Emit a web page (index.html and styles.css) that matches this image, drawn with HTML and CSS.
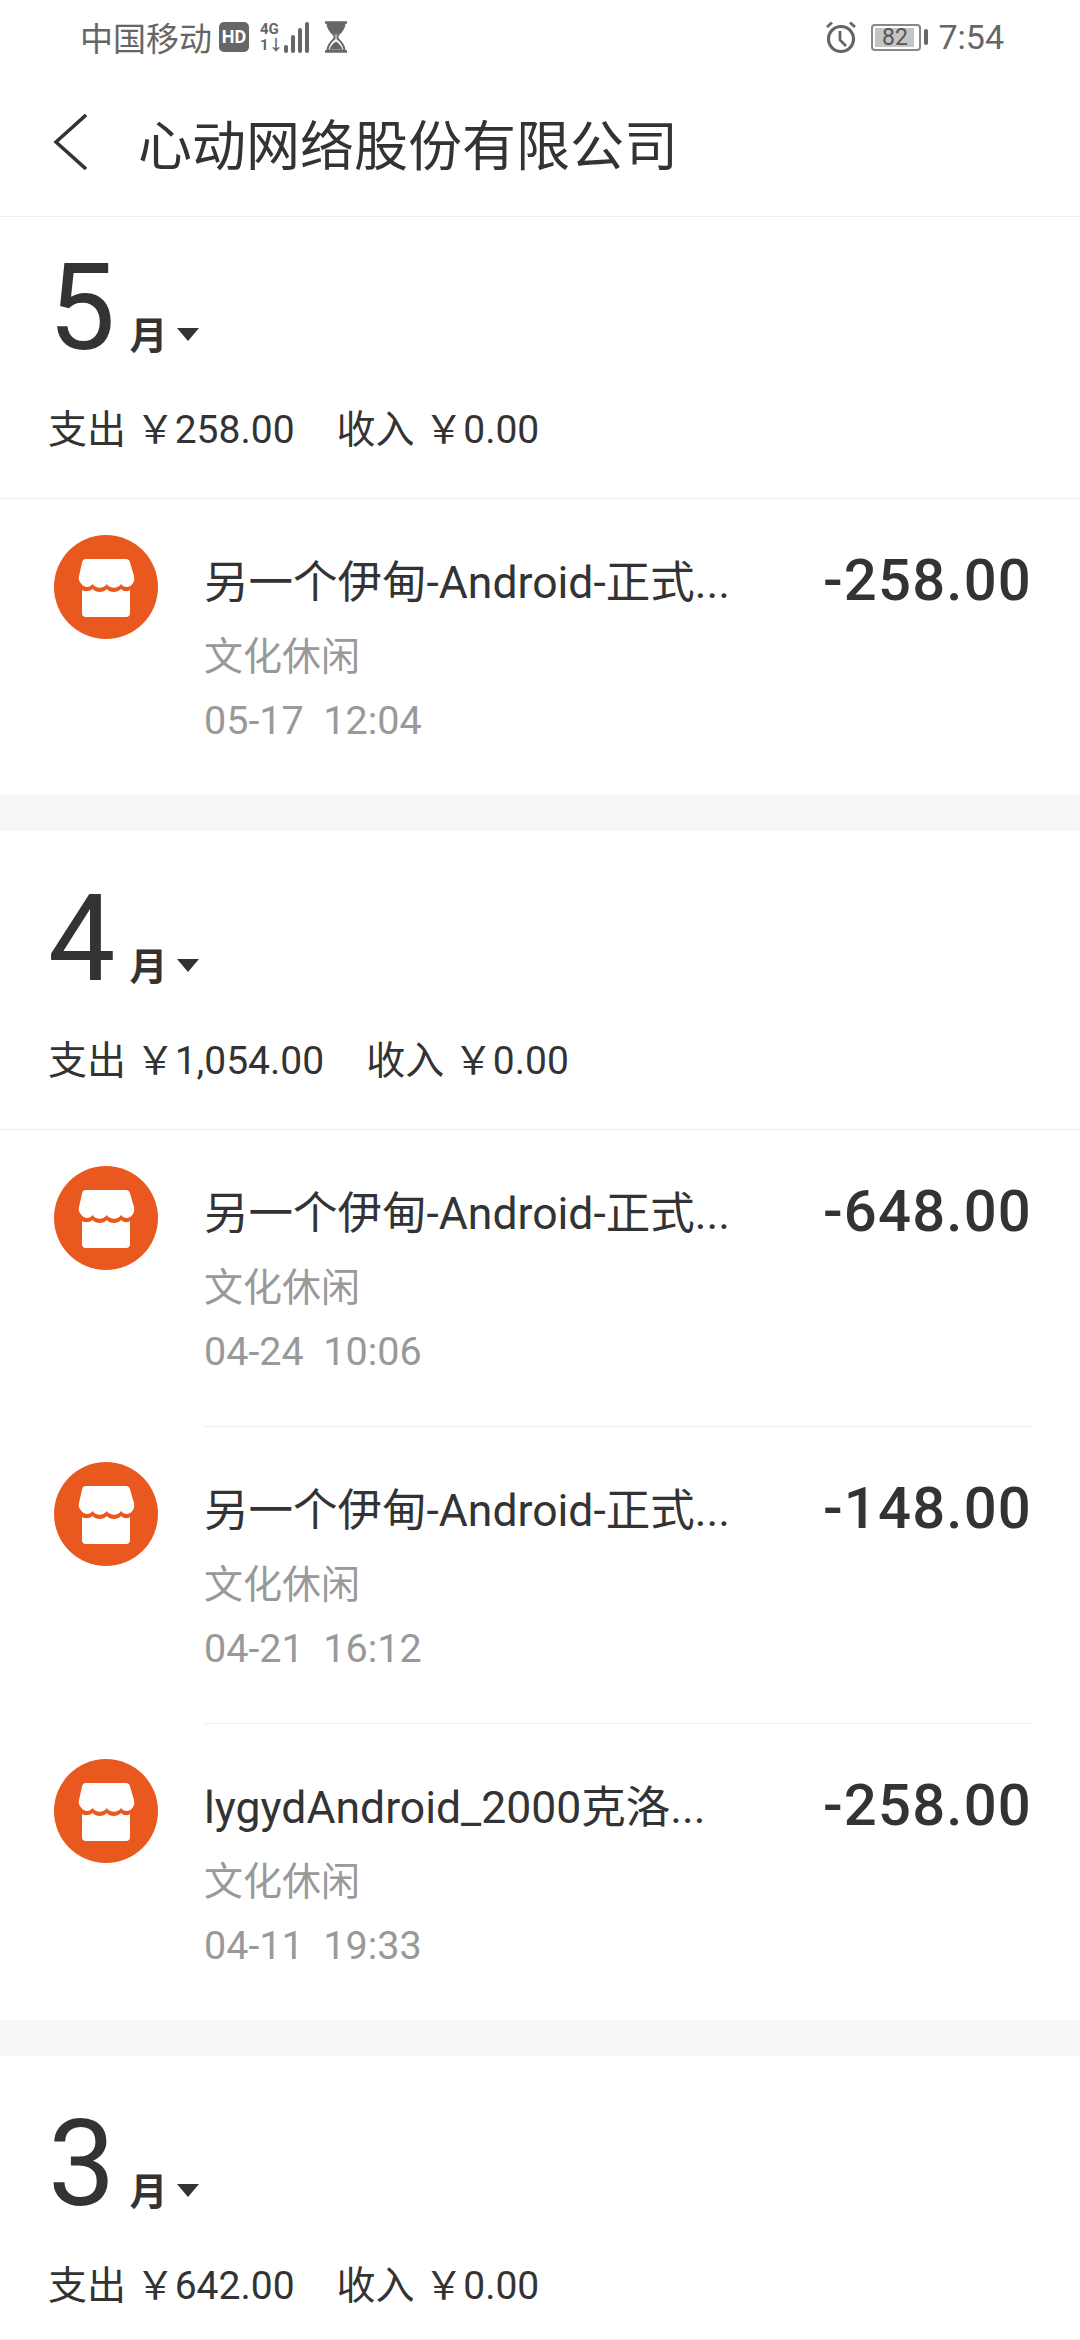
FILE: index.html
```html
<!DOCTYPE html>
<html lang="zh-CN">
<head>
    <meta charset="UTF-8">
    <title>心动网络股份有限公司</title>
    <link rel="stylesheet" href="styles.css">
</head>
<body>
    <svg class="sprites" width="0" height="0">
        <symbol id="shop" viewBox="0 0 104 104">
            <circle cx="52" cy="52" r="52" fill="#e8581f"/>
            <path d="M32 24H72a4 4 0 0 1 3.800 2.800L80 41q1 4-1 7c-3 5-9 5-12 1c-3 5-11 5-14.300 0c-3 5-11 5-14 0c-3 4-9 4-12-1q-2.700-3-1.700-7L28.200 26.800A4 4 0 0 1 32 24z" fill="#fff"/>
            <path d="M28 55c3 2 7 1.500 10.700-1c3 4 11 4 14 0c3 4 11 4 14.300 0c3 2.500 6 3 9 1V78a4 4 0 0 1-4 4H32a4 4 0 0 1-4-4z" fill="#fff"/>
        </symbol>
    </svg>

    <div class="phone">
        <!-- Status bar -->
        <div class="status-bar">
            <div class="status-left">
                <span>中国移动</span>
                <span class="hd-badge">HD</span>
                <span class="net-type"><span>4G</span><span>1↓</span></span>
                <svg class="signal" width="26" height="31" viewBox="0 0 26 31">
                    <rect x="0" y="23" width="4" height="8" rx="2"/>
                    <rect x="7" y="13" width="4" height="18" rx="2"/>
                    <rect x="14" y="6" width="4" height="25" rx="2"/>
                    <rect x="21" y="0" width="4" height="31" rx="2"/>
                </svg>
                <svg class="hourglass" width="24" height="32" viewBox="0 0 24 31">
                    <path d="M1 1h22M1 30h22" stroke="#666" stroke-width="2.500" fill="none"/>
                    <path d="M3.500 2h17c0 6-4 9-7 12v3c3 3 7 6 7 12h-17c0-6 4-9 7-12v-3c-3-3-7-6-7-12z" fill="#fff" stroke="#666" stroke-width="2"/>
                    <path d="M4 2h16c0 5-3.500 9-8 11.500C7.500 11 4 7 4 2zM5.500 28c1-3.500 3.500-6 6.500-8 3 2 5.500 4.500 6.500 8z" fill="#666"/>
                </svg>
            </div>
            <div class="status-right">
                <svg class="alarm" width="32" height="34" viewBox="0 0 32 34" fill="none" stroke="#666" stroke-width="3.200">
                    <circle cx="16" cy="19" r="12.500"/>
                    <path d="M15 11v9l6 6" stroke-width="2.800"/>
                    <path d="M2 7l5-4.500M30 7l-5-4.500" stroke-width="2.800"/>
                </svg>
                <span class="battery"><span class="battery-level">82</span></span>
                <span class="battery-cap"></span>
                <span class="clock">7:54</span>
            </div>
        </div>

        <!-- Title bar -->
        <header class="title-bar">
            <svg class="back-icon" width="34" height="56" viewBox="0 0 34 56" fill="none" stroke="#333" stroke-width="3.500">
                <path d="M33 1L3 28l30 27"/>
            </svg>
            <h1>心动网络股份有限公司</h1>
        </header>

        <!-- May -->
        <section class="month month-first">
            <div class="month-title"><span class="month-num">5</span><span class="month-label">月</span><span class="caret"></span></div>
            <div class="month-sum"><span>支出 ￥258.00</span><span>收入 ￥0.00</span></div>
            <ul class="list">
                <li class="item">
                    <svg class="item-icon"><use href="#shop"/></svg>
                    <div class="item-body">
                        <div class="item-top"><span class="item-name">另一个伊甸-Android-正式...</span><span class="item-amount">-258.00</span></div>
                        <div class="item-cat">文化休闲</div>
                        <div class="item-date">05-17&nbsp;&nbsp;12:04</div>
                    </div>
                </li>
            </ul>
        </section>

        <!-- April -->
        <section class="month">
            <div class="month-title"><span class="month-num">4</span><span class="month-label">月</span><span class="caret"></span></div>
            <div class="month-sum"><span>支出 ￥1,054.00</span><span>收入 ￥0.00</span></div>
            <ul class="list">
                <li class="item">
                    <svg class="item-icon"><use href="#shop"/></svg>
                    <div class="item-body">
                        <div class="item-top"><span class="item-name">另一个伊甸-Android-正式...</span><span class="item-amount">-648.00</span></div>
                        <div class="item-cat">文化休闲</div>
                        <div class="item-date">04-24&nbsp;&nbsp;10:06</div>
                    </div>
                </li>
                <li class="item">
                    <svg class="item-icon"><use href="#shop"/></svg>
                    <div class="item-body">
                        <div class="item-top"><span class="item-name">另一个伊甸-Android-正式...</span><span class="item-amount">-148.00</span></div>
                        <div class="item-cat">文化休闲</div>
                        <div class="item-date">04-21&nbsp;&nbsp;16:12</div>
                    </div>
                </li>
                <li class="item">
                    <svg class="item-icon"><use href="#shop"/></svg>
                    <div class="item-body">
                        <div class="item-top"><span class="item-name">lygydAndroid_2000克洛...</span><span class="item-amount">-258.00</span></div>
                        <div class="item-cat">文化休闲</div>
                        <div class="item-date">04-11&nbsp;&nbsp;19:33</div>
                    </div>
                </li>
            </ul>
        </section>

        <!-- March -->
        <section class="month">
            <div class="month-title"><span class="month-num">3</span><span class="month-label">月</span><span class="caret"></span></div>
            <div class="month-sum"><span>支出 ￥642.00</span><span>收入 ￥0.00</span></div>
        </section>
    </div>
</body>
</html>
```

FILE: styles.css
```css
/* General styles */
html, body {
    margin: 0;
    padding: 0;
    background-color: #fff;
}

body {
    font-family: Roboto, "Noto Sans CJK SC", sans-serif;
    color: #333;
}

.sprites {
    display: block;
}

.phone {
    width: 1080px;
    height: 2340px;
    box-sizing: border-box;
    border-bottom: 1px solid #eee;
    overflow: hidden;
}

/* Status bar */
.status-bar {
    height: 74px;
    padding: 0 0 0 80px;
    display: flex;
    justify-content: space-between;
    align-items: center;
    color: #666;
    font-size: 33px;
}

.status-left,
.status-right {
    display: flex;
    align-items: center;
}

.hd-badge {
    width: 30px;
    height: 30px;
    margin-left: 7px;
    border-radius: 5px;
    background-color: #666;
    color: #fff;
    font-size: 18px;
    font-weight: 700;
    line-height: 30px;
    text-align: center;
}

.net-type {
    display: flex;
    flex-direction: column;
    margin-left: 11px;
    width: 20px;
    font-size: 15px;
    font-weight: 700;
    line-height: 16px;
}

.signal {
    fill: #666;
    margin-left: 4px;
}

.hourglass {
    margin-left: 14px;
}

.status-right {
    padding-right: 76px;
}

.battery {
    width: 50px;
    height: 27px;
    margin-left: 14px;
    border: 2px solid #888;
    border-radius: 4px;
    padding: 2px;
    box-sizing: border-box;
    display: block;
}

.battery-level {
    display: block;
    width: 39px;
    height: 19px;
    background-color: #c4c4c4;
    color: #555;
    font-size: 23px;
    line-height: 19px;
    text-align: center;
}

.battery-cap {
    width: 4px;
    height: 16px;
    margin-left: 3px;
    border-radius: 2px;
    background-color: #666;
}

.clock {
    margin-left: 10px;
    font-size: 34px;
}

/* Title bar */
.title-bar {
    height: 136px;
    padding: 0 0 6px 53px;
    display: flex;
    align-items: center;
    border-bottom: 1px solid #eee;
}

.title-bar h1 {
    margin: 0 0 0 51px;
    font-size: 54px;
    font-weight: 400;
}

/* Month blocks */
.month {
    border-top: 36px solid #f7f7f7;
    padding-top: 58px;
}

.month-first {
    border-top: none;
    padding-top: 41px;
}

.month-title {
    display: flex;
    align-items: baseline;
    padding-left: 48px;
    height: 100px;
}

.month-num {
    font-size: 120px;
    line-height: 100px;
}

.month-label {
    margin-left: 14px;
    font-size: 38px;
    font-weight: 700;
}

.caret {
    width: 0;
    height: 0;
    margin: 70px 0 0 10px;
    border-left: 11px solid transparent;
    border-right: 11px solid transparent;
    border-top: 13px solid #333;
    align-self: flex-start;
}

.month-sum {
    display: flex;
    gap: 42px;
    padding: 47px 0 43px 48px;
    font-size: 39px;
    line-height: 50px;
}

/* Bills */
.list {
    list-style: none;
    margin: 0;
    padding: 0;
    border-top: 1px solid #eee;
}

.item {
    display: flex;
    padding: 0 48px 0 54px;
}

.item-icon {
    flex: none;
    width: 104px;
    height: 104px;
    margin-top: 36px;
}

.item-body {
    flex: 1;
    height: 296px;
    margin-left: 46px;
    padding-top: 51px;
    box-sizing: border-box;
}

.item + .item .item-body {
    height: 297px;
    border-top: 1px solid #eee;
}

.item-top {
    display: flex;
    justify-content: space-between;
    height: 66px;
}

.item-name {
    font-size: 44.500px;
    line-height: 66px;
}

.item-amount {
    font-size: 58px;
    font-weight: 500;
    line-height: 60px;
    letter-spacing: 1.200px;
}

.item-cat {
    margin-top: 16px;
    font-size: 39px;
    line-height: 50px;
    color: #999;
}

.item-date {
    margin-top: 14px;
    font-size: 39.500px;
    line-height: 50px;
    color: #999;
}
```
